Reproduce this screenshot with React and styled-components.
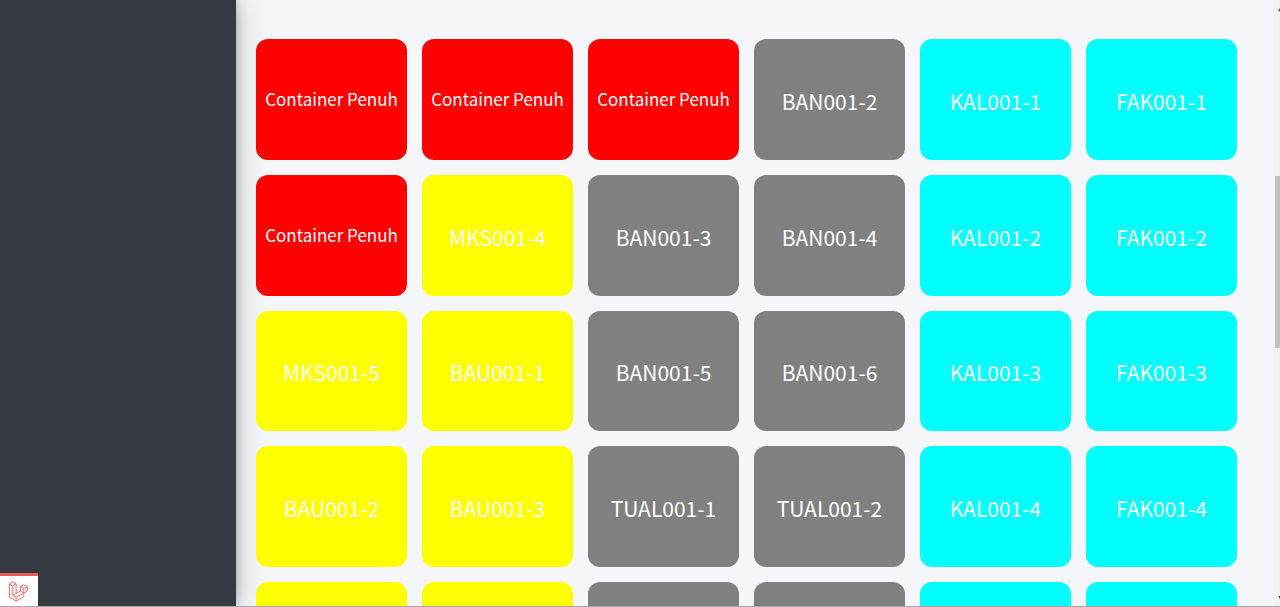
import React from "react";
import styled, { createGlobalStyle } from "styled-components";

const GlobalStyle = createGlobalStyle`
  * { box-sizing: border-box; }
  body {
    margin: 0;
    overflow: hidden;
    background: #f4f6f9;
    font-family: "Source Sans Pro", "Noto Sans CJK SC", sans-serif;
  }
`;

const Page = styled.div`
  display: flex;
  height: 100vh;
  overflow: hidden;
  border-bottom: 1px solid #a5a6a8;
`;

const Sidebar = styled.aside`
  flex: 0 0 236px;
  display: flex;
  align-items: flex-end;
  background: #343a40;
  box-shadow: 0 0 28px rgba(0, 0, 0, 0.25), 0 0 10px rgba(0, 0, 0, 0.22);
`;

const DebugButton = styled.button`
  display: flex;
  align-items: center;
  justify-content: center;
  width: 38px;
  height: 33px;
  padding: 0 2px 0 0;
  border: 0;
  border-top: 3px solid #e85a5a;
  background: #fff;
`;

const Main = styled.main`
  flex: 1;
  min-width: 0;
  padding: 39px 37px 0 20px;
`;

const TileGrid = styled.div`
  display: grid;
  grid-template-columns: repeat(6, minmax(0, 1fr));
  gap: 15px;
`;

const Tile = styled.div`
  display: flex;
  align-items: center;
  justify-content: center;
  aspect-ratio: 5 / 4;
  padding-top: ${(p) => (p.$full ? "0" : "3px")};
  border-radius: 12px;
  background: ${(p) => p.$color};
  color: #fff;
  font-size: ${(p) => (p.$full ? "17px" : "21px")};
  line-height: 24px;
  white-space: nowrap;
`;

const ScrollTrack = styled.div`
  flex: 0 0 6px;
  display: flex;
  flex-direction: column;
  align-items: flex-end;
  padding: 8px 0 7px;
  background: #f1f1f1;
`;

const ScrollSpace = styled.div`
  flex: ${(p) => p.$grow} 0 0;
`;

const ScrollThumb = styled.div`
  flex: 172 0 0;
  width: 5px;
  background: #c1c1c1;
`;

const Arrow = styled.svg`
  display: block;
  flex: none;
`;

const colors = { red: "#ff0000", yellow: "#ffff00", gray: "#808080", cyan: "#00ffff" };

const full = ["Container Penuh", "red"];
const tiles = [
  full, full, full, ["BAN001-2", "gray"], ["KAL001-1", "cyan"], ["FAK001-1", "cyan"],
  full, ["MKS001-4", "yellow"], ["BAN001-3", "gray"], ["BAN001-4", "gray"], ["KAL001-2", "cyan"], ["FAK001-2", "cyan"],
  ["MKS001-5", "yellow"], ["BAU001-1", "yellow"], ["BAN001-5", "gray"], ["BAN001-6", "gray"], ["KAL001-3", "cyan"], ["FAK001-3", "cyan"],
  ["BAU001-2", "yellow"], ["BAU001-3", "yellow"], ["TUAL001-1", "gray"], ["TUAL001-2", "gray"], ["KAL001-4", "cyan"], ["FAK001-4", "cyan"],
  ["", "yellow"], ["", "yellow"], ["", "gray"], ["", "gray"], ["", "cyan"], ["", "cyan"],
];

function LaravelLogo() {
  return (
    <svg width="21" height="21" viewBox="0 0 21 22" fill="none" stroke="#ee6b66" strokeWidth="1" strokeLinejoin="round" aria-hidden="true">
      <path d="M1 3 L4.500 1 L8 3 V13 L12.500 10.500 V6 L16 4 L20 6 V10.500 L16 12.500 V16.500 L8 21 L1 17 Z" />
      <path d="M1 3 L4.500 5 L8 3 M4.500 5 V15 L8 17 L16 12.500 M8 17 V21 M4.500 15 L8 13 M12.500 6 L16 8 L20 6 M16 8 V12.500 L12.500 10.500" />
    </svg>
  );
}

export default function App() {
  return (
    <>
      <GlobalStyle />
      <Page>
        <Sidebar>
          <DebugButton type="button" aria-label="Debugbar">
            <LaravelLogo />
          </DebugButton>
        </Sidebar>
        <Main>
          <TileGrid>
            {tiles.map(([label, color], i) => (
              <Tile key={i} $color={colors[color]} $full={color === "red"}>
                {label}
              </Tile>
            ))}
          </TileGrid>
        </Main>
        <ScrollTrack aria-hidden="true">
          <Arrow width="2" height="3" viewBox="0 0 2 3"><path d="M2 0 L0 3 H2 Z" fill="#505050" /></Arrow>
          <ScrollSpace $grow={165} />
          <ScrollThumb />
          <ScrollSpace $grow={248} />
          <Arrow width="2" height="3" viewBox="0 0 2 3"><path d="M0 0 H2 V3 Z" fill="#505050" /></Arrow>
        </ScrollTrack>
      </Page>
    </>
  );
}
